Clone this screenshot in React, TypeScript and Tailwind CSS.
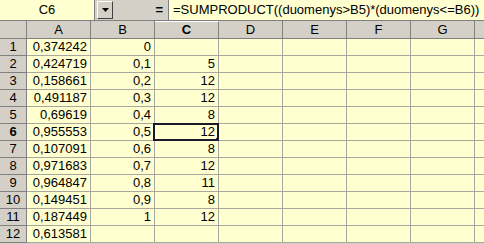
const colA = [
  "0,374242", "0,424719", "0,158661", "0,491187", "0,69619", "0,955553",
  "0,107091", "0,971683", "0,964847", "0,149451", "0,187449", "0,613581",
];
const colB = ["0", "0,1", "0,2", "0,3", "0,4", "0,5", "0,6", "0,7", "0,8", "0,9", "1", ""];
const colC = ["", "5", "12", "12", "8", "12", "8", "12", "11", "8", "12", ""];
const headers = ["A", "B", "C", "D", "E", "F", "G", ""];

function Cell({ value, selected }: { value: string; selected?: boolean }) {
  return (
    <div className="relative h-[17px] w-[64px] shrink-0 border-r border-b border-[#a9a8a0] bg-[#ffffd0] pr-[3px] text-right leading-[16px]">
      {value}
      {selected && (
        <>
          <div className="absolute -left-[2px] -top-[1px] h-[18px] w-[66px] border-2 border-[#1a1a2a]" />
          <div className="absolute -bottom-[3px] -right-[3px] h-[5px] w-[5px] bg-[#1a1a3a]" />
        </>
      )}
    </div>
  );
}

export default function App() {
  return (
    <div className="h-[244px] w-[484px] overflow-hidden bg-[#d4d0c8] text-[13px] text-black [font-family:'Liberation_Sans',Arial,sans-serif]">
      {/* Formula bar */}
      <div className="flex h-[21px] items-stretch border-b border-[#808080]">
        <div className="flex w-[95px] items-center justify-center border-r border-[#808080] bg-[#ffffd0] pb-[1px]">
          C6
        </div>
        <div className="ml-[2px] mt-[1px] flex h-[18px] w-[16px] items-center justify-center border border-t-white border-l-white border-r-[#404040] border-b-[#404040] bg-[#d4d0c8]">
          <svg width="7" height="4" viewBox="0 0 7 4">
            <path d="M0 0h7L3.5 4z" fill="#000" />
          </svg>
        </div>
        <div className="flex w-[55px] items-center justify-end pr-[5px] font-bold">=</div>
        <div className="flex flex-1 items-center border-l border-[#808080] bg-[#ffffd0] pl-[4px]">
          =SUMPRODUCT((duomenys&gt;B5)*(duomenys&lt;=B6))
        </div>
      </div>

      {/* Column headers */}
      <div className="flex h-[18px]">
        <div className="h-[18px] w-[27px] shrink-0 border-r border-b border-[#808080] bg-[#d4d0c8]" />
        {headers.map((h) => (
          <div
            key={h || "x"}
            className={`flex h-[18px] w-[64px] shrink-0 items-center justify-center border-r border-b border-[#808080] bg-[#d4d0c8] ${
              h === "C" ? "border-t border-t-white font-bold" : ""
            }`}
          >
            {h}
          </div>
        ))}
      </div>

      {/* Rows */}
      {colA.map((a, i) => (
        <div key={i} className="flex h-[17px]">
          <div
            className={`flex h-[17px] w-[27px] shrink-0 items-center justify-center border-r border-b border-[#808080] bg-[#d4d0c8] ${
              i === 5 ? "font-bold" : ""
            }`}
          >
            {i + 1}
          </div>
          <Cell value={a} />
          <Cell value={colB[i]} />
          <Cell value={colC[i]} selected={i === 5} />
          <Cell value="" />
          <Cell value="" />
          <Cell value="" />
          <Cell value="" />
          <Cell value="" />
        </div>
      ))}
    </div>
  );
}
